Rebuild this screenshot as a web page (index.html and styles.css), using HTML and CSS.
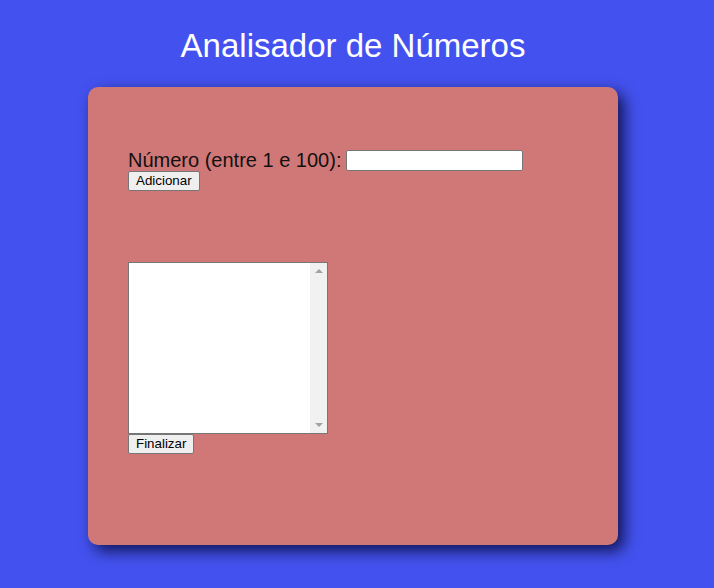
FILE: index.html
```html
<!DOCTYPE html>
<html lang="pt">
<head>
<meta charset="utf-8">
<title>Analisador de Números</title>
<link rel="stylesheet" href="styles.css">
</head>
<body>
<h1 class="title">Analisador de Números</h1>
<section class="card">
  <div class="row">
    <label class="label" for="num">Número (entre 1 e 100):</label>
    <input class="field" type="number" id="num">
  </div>
  <button class="btn" type="button">Adicionar</button>
  <div class="list">
    <textarea class="list-area" readonly></textarea>
    <div class="scrollbar">
      <span class="arrow arrow-up"></span>
      <span class="arrow arrow-down"></span>
    </div>
  </div>
  <button class="btn" type="button">Finalizar</button>
  <div class="result"></div>
</section>
</body>
</html>
```
FILE: styles.css
```css
html, body {
  margin: 0;
  padding: 0;
}
body {
  background: #4352ef;
  font-family: "Liberation Sans", Arial, sans-serif;
  padding: 0 8px 0 0;
  height: 588px;
  box-sizing: border-box;
  overflow: hidden;
}
.title {
  margin: 0;
  padding-top: 27px;
  font-size: 33px;
  font-weight: normal;
  line-height: 38px;
  color: #ffffff;
  text-align: center;
}
.card {
  width: 530px;
  height: 458px;
  box-sizing: border-box;
  margin: 22px auto 0;
  padding: 62px 40px 0;
  background: #d07877;
  border-radius: 10px;
  box-shadow: 6px 6px 15px rgba(0, 0, 30, 0.75);
  display: flex;
  flex-direction: column;
  align-items: flex-start;
}
.row {
  display: flex;
  align-items: center;
  gap: 5px;
  height: 22px;
}
.label {
  font-size: 20px;
  color: #111;
  line-height: 23px;
}
.field {
  width: 177px;
  height: 21px;
  box-sizing: border-box;
  border: 1px solid #767676;
  border-radius: 2px;
  background: #fff;
  padding: 1px 2px;
  margin: 1px 0 0;
  font: 13.33px "Liberation Sans", Arial, sans-serif;
  -moz-appearance: textfield;
  appearance: textfield;
}
.field::-webkit-inner-spin-button,
.field::-webkit-outer-spin-button {
  -webkit-appearance: none;
  margin: 0;
}
.btn {
  margin: 0;
  height: 20px;
  padding: 0 7px;
  box-sizing: border-box;
  border: 1px solid #767676;
  border-radius: 2px;
  background: #efefef;
  color: #000;
  font: 13.33px "Liberation Sans", Arial, sans-serif;
  line-height: 18px;
}
.list {
  display: flex;
  margin: 71px 0 0;
  width: 200px;
  height: 172px;
  box-sizing: border-box;
  border: 1px solid #767676;
  background: #fff;
}
.list-area {
  flex: 1;
  min-width: 0;
  border: none;
  outline: none;
  resize: none;
  margin: 0;
  padding: 0;
  background: #fff;
}
.scrollbar {
  width: 17px;
  background: #f1f1f1;
  display: flex;
  flex-direction: column;
  justify-content: space-between;
  align-items: center;
  padding: 6px 0;
  box-sizing: border-box;
}
.arrow {
  width: 0;
  height: 0;
  border-left: 4px solid transparent;
  border-right: 4px solid transparent;
}
.arrow-up {
  border-bottom: 4px solid #a3a3a3;
}
.arrow-down {
  border-top: 4px solid #a3a3a3;
}
.result {
  margin-top: 20px;
}
```
